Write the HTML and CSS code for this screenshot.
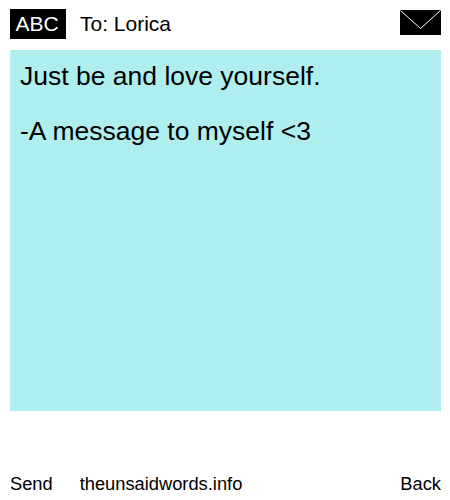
FILE: index.html
```html
<!DOCTYPE html>
<html lang="en">
<head>
    <meta charset="UTF-8">
    <meta name="viewport" content="width=device-width, initial-scale=1.0">
    <title>The Unsaid Words</title>
    <link rel="stylesheet" href="styles.css">
</head>
<body>
    <header class="top">
        <div class="abc">ABC</div>
        <div class="to">To: Lorica</div>
        <svg class="envelope" width="41" height="25" viewBox="0 0 41 25">
            <rect width="41" height="25" fill="#000"/>
            <path d="M0.5 0.5 L20.5 18.5 L40.5 0.5" fill="none" stroke="#fff" stroke-width="1"/>
        </svg>
    </header>
    <main class="note">
        <p>Just be and love yourself.</p>
        <p>-A message to myself &lt;3</p>
    </main>
    <footer class="bottom">
        <span class="send">Send</span>
        <span class="site">theunsaidwords.info</span>
        <span class="back">Back</span>
    </footer>
</body>
</html>
```
FILE: styles.css
```css
body {
    font-family: "Liberation Sans", Arial, sans-serif;
    margin: 0;
    padding: 0 9px 0 10px;
    width: 431px;
    height: 500px;
    display: flex;
    flex-direction: column;
    background-color: #fff;
    color: #000;
    overflow: hidden;
}
.top {
    display: flex;
    align-items: flex-start;
    height: 30px;
    margin-top: 9px;
    margin-bottom: 11px;
}
.abc {
    width: 54px;
    height: 30px;
    padding-right: 2px;
    line-height: 29px;
    background-color: #000;
    color: #fff;
    font-size: 21px;
    text-align: center;
}
.to {
    margin-left: 14px;
    font-size: 21px;
    line-height: 29px;
}
.envelope {
    margin-left: auto;
    margin-top: 1px;
}
.note {
    height: 361px;
    box-sizing: border-box;
    padding: 10px;
    background-color: #afeeee;
    font-size: 26.5px;
}
.note p {
    margin: 0 0 23px;
    line-height: 32px;
}
.bottom {
    display: flex;
    margin-top: 62px;
    font-size: 18.3px;
    line-height: 22px;
}
.site {
    margin-left: 27px;
}
.back {
    margin-left: auto;
}
```
